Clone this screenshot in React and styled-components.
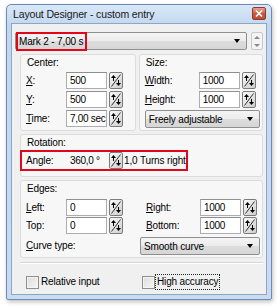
import styled, { createGlobalStyle } from "styled-components";

const Global = createGlobalStyle`
  body {
    margin: 0;
    background: #ffffff;
    font-family: "Liberation Sans", Arial, sans-serif;
    font-size: 10px;
    letter-spacing: -0.15px;
    color: #000;
  }
`;

const Page = styled.div`
  width: 280px;
  height: 306px;
  padding: 4px 0 0 6px;
  box-sizing: border-box;
`;

const Window = styled.div`
  width: 266px;
  height: 296px;
  box-sizing: border-box;
  border: 1px solid #6d8bb0;
  border-radius: 5px 5px 2px 2px;
  background: linear-gradient(180deg, #d9e8f8 0%, #c2d7ef 20px, #c8dbf1 100%);
  box-shadow: 1px 2px 4px rgba(0, 0, 0, 0.25);
  display: flex;
  flex-direction: column;
  padding: 0 4px 4px 4px;
`;

const TitleBar = styled.div`
  height: 18px;
  display: flex;
  align-items: center;
  justify-content: space-between;
  padding-left: 2px;
`;

const Title = styled.span`
  font-size: 10.5px;
  color: #1a1a1a;
`;

const CloseBtn = styled.div`
  width: 12px;
  height: 11px;
  margin-right: 1px;
  margin-bottom: 1px;
  border: 1px solid #8e3a2f;
  border-radius: 2px;
  background: linear-gradient(180deg, #e8a293 0%, #c7553f 55%, #c24a33 100%);
  display: flex;
  align-items: center;
  justify-content: center;
`;

const Client = styled.div`
  flex: 1;
  border: 1px solid #8ba6c7;
  background: #f0f0f0;
  display: flex;
  flex-direction: column;
  padding: 8px 3px 0 3px;
`;

const TopRow = styled.div`
  display: flex;
  align-items: center;
  gap: 4px;
  margin-bottom: 4px;
`;

const Combo = styled.div`
  flex: ${(p) => (p.grow ? 1 : "none")};
  width: ${(p) => (p.w ? `${p.w}px` : "auto")};
  height: 18px;
  box-sizing: border-box;
  border: 1px solid #8f8f8f;
  border-radius: 2px;
  background: linear-gradient(180deg, #f4f4f4 0%, #ebebeb 50%, #dcdcdc 51%, #d6d6d6 100%);
  display: flex;
  align-items: center;
  justify-content: space-between;
  padding: 0 6px 0 3px;
`;

const Marked = styled.span`
  border: 2px solid #e2061b;
  padding: 1px 2px 1px 1px;
  margin-left: -3px;
  line-height: 13px;
`;

const Arrow = styled.span`
  width: 0;
  height: 0;
  border-left: 3px solid transparent;
  border-right: 3px solid transparent;
  border-top: 4px solid #000;
`;

const MiniSpin = styled.div`
  width: 10px;
  height: 16px;
  display: flex;
  flex-direction: column;
  align-items: center;
  justify-content: space-around;
  border: 1px solid #c9c9c9;
  border-radius: 2px;
  background: #f4f4f4;
`;

const Tri = styled.span`
  width: 0;
  height: 0;
  border-left: 3px solid transparent;
  border-right: 3px solid transparent;
  ${(p) => (p.up ? "border-bottom: 3px solid #8a8a8a;" : "border-top: 3px solid #8a8a8a;")}
`;

const Groups = styled.div`
  display: flex;
  flex-direction: column;
  gap: 3px;
  padding: 0 0 0 5px;
`;

const GroupRow = styled.div`
  display: flex;
  gap: 3px;
`;

const Group = styled.div`
  flex: ${(p) => p.flex || 1};
  border: 1px solid #dcdcdc;
  border-radius: 3px;
  background: #f7f7f7;
  padding: 1px 2px ${(p) => p.pb ?? 2}px 5px;
  display: flex;
  flex-direction: column;
  gap: ${(p) => p.gap ?? 2}px;
`;

const GroupTitle = styled.div`
  padding-left: 1px;
  height: 13px;
  line-height: 13px;
  margin-bottom: ${(p) => p.mb ?? 0}px;
`;

const Cols = styled.div`
  display: flex;
  gap: 6px;
`;

const Col = styled.div`
  flex: 1;
  display: flex;
  flex-direction: column;
  gap: 1px;
`;

const Field = styled.div`
  display: flex;
  align-items: center;
  height: 17px;
  ${(p) =>
    p.marked &&
    `border: 2px solid #e2061b; margin: -1px 0 0 -6px; padding-left: 4px; width: 160px;`}
`;

const Label = styled.span`
  width: ${(p) => p.w || 40}px;
  flex: none;
  u {
    text-decoration: underline;
  }
`;

const Input = styled.div`
  width: 41px;
  height: 17px;
  box-sizing: border-box;
  border: 1px solid ${(p) => (p.flat ? "transparent" : "#abadb3")};
  border-top-color: ${(p) => (p.flat ? "transparent" : "#8e8f8f")};
  background: ${(p) => (p.flat ? "transparent" : "#fff")};
  padding: 1px 0 0 3px;
  line-height: 13px;
  letter-spacing: -0.3px;
  white-space: nowrap;
  overflow: hidden;
`;

const SpinBox = styled.div`
  width: 14px;
  height: 17px;
  box-sizing: border-box;
  margin-left: 2px;
  border: 1px solid #7b7b7b;
  border-radius: 2px;
  background: linear-gradient(135deg, #fbfbfb 0%, #dedede 60%, #cfcfcf 100%);
  display: flex;
`;

const After = styled.span`
  margin-left: 1px;
  white-space: nowrap;
`;

const Separator = styled.div`
  height: 0;
  border-top: 1px solid #d5d5d5;
  border-bottom: 1px solid #ffffff;
  margin: 4px 0 10px 5px;
`;

const CheckRow = styled.div`
  display: flex;
  padding-left: 11px;
`;

const Check = styled.label`
  display: flex;
  align-items: center;
  gap: 0;
  width: ${(p) => p.w}px;
`;

const Box = styled.span`
  width: 11px;
  height: 11px;
  border: 1px solid #8f8f8f;
  background: linear-gradient(135deg, #dcdcdc 0%, #f6f6f6 100%);
  box-shadow: inset 0 0 0 1px #f4f4f4;
`;

const CheckText = styled.span`
  padding: 1px 1px;
  border: 1px ${(p) => (p.focus ? "dotted #222" : "solid transparent")};
  line-height: 12px;
`;

const Spin = () => (
  <SpinBox>
    <svg width="12" height="15" viewBox="0 0 12 15">
      <line x1="1.5" y1="13.5" x2="10.5" y2="1.5" stroke="#333" strokeWidth="1" />
      <path d="M3.5 2 L1 5 L6 5 Z" fill="#000" />
      <rect x="3" y="5" width="1" height="3" fill="#000" />
      <path d="M8.5 13 L6 10 L11 10 Z" fill="#000" />
      <rect x="8" y="7" width="1" height="3" fill="#000" />
    </svg>
  </SpinBox>
);

const NumField = ({ label, under, value, lw }) => (
  <Field>
    <Label w={lw}>
      {under ? <u>{label[0]}</u> : null}
      {under ? label.slice(1) : label}
    </Label>
    <Input>{value}</Input>
    <Spin />
  </Field>
);

const App = () => {
  return (
    <Page>
      <Global />
      <Window>
        <TitleBar>
          <Title>Layout Designer - custom entry</Title>
          <CloseBtn>
            <svg width="8" height="7" viewBox="0 0 8 7">
              <path d="M1 0.5 L7 6.5 M7 0.5 L1 6.5" stroke="#fff" strokeWidth="1.6" />
            </svg>
          </CloseBtn>
        </TitleBar>
        <Client>
          <TopRow>
            <Combo grow>
              <Marked>Mark 2 - 7,00 s</Marked>
              <Arrow />
            </Combo>
            <MiniSpin>
              <Tri up />
              <Tri />
            </MiniSpin>
          </TopRow>
          <Groups>
            <GroupRow>
              <Group flex="115">
                <GroupTitle mb={1}>Center:</GroupTitle>
                <NumField label="X:" under value="500" lw={40} />
                <NumField label="Y:" under value="500" lw={40} />
                <NumField label="Time:" under value="7,00 sec" lw={40} />
              </Group>
              <Group flex="124">
                <GroupTitle mb={1}>Size:</GroupTitle>
                <NumField label="Width:" under value="1000" lw={54} />
                <NumField label="Height:" under value="1000" lw={54} />
                <Combo>
                  <span>Freely adjustable</span>
                  <Arrow />
                </Combo>
              </Group>
            </GroupRow>
            <Group pb={5}>
              <GroupTitle mb={0}>Rotation:</GroupTitle>
              <Field marked>
                <Label w={40}>Angle:</Label>
                <Input flat>360,0 °</Input>
                <Spin />
                <After>1,0 Turns right</After>
              </Field>
            </Group>
            <Group gap={3}>
              <GroupTitle mb={1}>Edges:</GroupTitle>
              <Cols>
                <Col>
                  <NumField label="Left:" under value="0" lw={40} />
                  <NumField label="Top:" value="0" lw={40} />
                </Col>
                <Col>
                  <NumField label="Right:" under value="1000" lw={54} />
                  <NumField label="Bottom:" under value="1000" lw={54} />
                </Col>
              </Cols>
              <Cols>
                <Field style={{ flex: 1 }}>
                  <Label w={80}>
                    <u>C</u>urve type:
                  </Label>
                </Field>
                <Combo w={120}>
                  <span>Smooth curve</span>
                  <Arrow />
                </Combo>
              </Cols>
            </Group>
          </Groups>
          <Separator />
          <CheckRow>
            <Check w={116}>
              <Box />
              <CheckText>Relative input</CheckText>
            </Check>
            <Check w={100}>
              <Box />
              <CheckText focus>High accuracy</CheckText>
            </Check>
          </CheckRow>
        </Client>
      </Window>
    </Page>
  );
};

export default App;
